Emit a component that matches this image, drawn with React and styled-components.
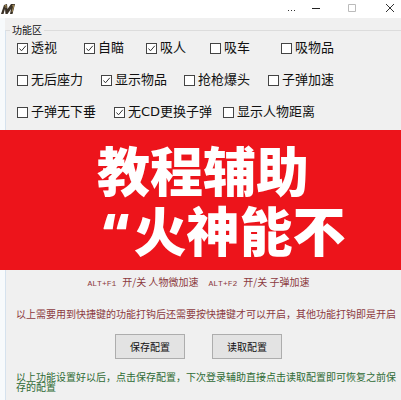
import styled, { createGlobalStyle } from "styled-components";

const GlobalStyle = createGlobalStyle`
  * {
    box-sizing: border-box;
  }
  body {
    margin: 0;
    background: #f0f0f0;
    font-family: "Noto Sans CJK SC", sans-serif;
    font-size: 10px;
    color: #111;
  }
`;

const Window = styled.div`
  display: flex;
  flex-direction: column;
  min-height: 100vh;
  overflow: hidden;
`;

const TitleBar = styled.header`
  display: flex;
  align-items: center;
  justify-content: space-between;
  height: 18px;
  padding-left: 1px;
  background: #fff;
`;

const WindowButtons = styled.div`
  display: flex;
  align-items: center;
`;

const WindowButton = styled.button`
  display: flex;
  justify-content: center;
  width: ${(props) => props.$width}px;
  padding: 0;
  border: none;
  background: none;
`;

const Client = styled.main`
  flex: 1;
  display: flex;
  flex-direction: column;
  padding-top: 4px;
  border-left: 5px solid #f7fafc;
`;

const Group = styled.fieldset`
  flex: 1;
  min-width: 0;
  margin: 0;
  padding: 0;
  border: 1px solid #dcdcdc;
  border-left-color: #d5e2ee;
  border-right: none;
  border-bottom: none;
`;

const Legend = styled.legend`
  margin-left: 4px;
  padding: 0 2px;
  line-height: 16px;
`;

const Options = styled.div`
  display: flex;
  flex-direction: column;
  gap: 12px;
  padding: 0 0 8px 11px;
`;

const OptionRow = styled.div`
  display: grid;
  grid-template-columns: ${(props) => props.$columns};
`;

const Option = styled.label`
  display: flex;
  align-items: center;
  gap: 3px;
  font-family: "DejaVu Sans", "Noto Sans CJK SC", sans-serif;
  font-size: 13px;
  line-height: 20px;
  white-space: nowrap;
`;

const Checkbox = styled.input`
  appearance: none;
  width: 11px;
  height: 11px;
  margin: 0;
  border: 1px solid #444;
  background: #fff;
  &:checked {
    background: #fff
      url("data:image/svg+xml,%3Csvg xmlns='http://www.w3.org/2000/svg' viewBox='0 0 9 9'%3E%3Cpath d='M1.5 4.5L3.5 6.8L7.8 1.8' fill='none' stroke='%23333'/%3E%3C/svg%3E");
  }
`;

const Banner = styled.h1`
  margin: 0 0 0 -6px;
  padding: 14px 0 6px 97px;
  background: #ed141b;
  color: #fff;
  font-family: "Liberation Sans", "Noto Sans CJK SC", sans-serif;
  font-size: 53px;
  font-weight: 900;
  line-height: 60px;
  white-space: nowrap;
`;

const Line = styled.span`
  display: block;
`;

const Quote = styled.span`
  margin: 0 4px 0 6px;
  font-family: "Open Sans", sans-serif;
  line-height: 1;
`;

const Shortcuts = styled.p`
  display: flex;
  justify-content: center;
  gap: 10px;
  margin: 4px 10px 17px 0;
  color: #8c3a40;
  line-height: 16px;
`;

const Key = styled.kbd`
  margin-right: 6px;
  font-family: "Liberation Mono", monospace;
  font-size: 8px;
`;

const Note = styled.p`
  margin: 0;
  padding-left: 10px;
  color: ${(props) => props.$color};
  line-height: 10px;
`;

const Actions = styled.div`
  display: flex;
  justify-content: center;
  gap: 27px;
  margin: 15px 10px 13px 0;
`;

const Button = styled.button`
  width: 70px;
  height: 25px;
  padding: 0;
  border: 1px solid #adadad;
  background: #e3e3e3;
  color: #111;
  font: inherit;
`;

const optionRows = [
  {
    columns: "67px 62px 64px 71px auto",
    options: [
      ["透视", true],
      ["自瞄", true],
      ["吸人", true],
      ["吸车", false],
      ["吸物品", false],
    ],
  },
  {
    columns: "84px 83px 84px auto",
    options: [
      ["无后座力", false],
      ["显示物品", true],
      ["抢枪爆头", false],
      ["子弹加速", false],
    ],
  },
  {
    columns: "97px 109px auto",
    options: [
      ["子弹无下垂", false],
      ["无CD更换子弹", true],
      ["显示人物距离", false],
    ],
  },
];

function Logo() {
  return (
    <svg width="14" height="12" viewBox="0 0 14 12">
      <path d="M0 11L3 2L6 1L6.500 6L10 1L14 1L11.500 11L9 11L10 6L6.500 11L4.500 11L4 6L2.500 11Z" fill="#3b3227" />
      <path d="M3.500 3L5 2L5 5M11 3L13 2L11 9" fill="none" stroke="#a58b55" />
    </svg>
  );
}

function App() {
  return (
    <Window>
      <GlobalStyle />
      <TitleBar>
        <Logo />
        <WindowButtons>
          <WindowButton $width={32} aria-label="More">
            <svg width="8" height="10"><path d="M1 6.500h1M4 6.500h1M7 6.500h1" stroke="#333" /></svg>
          </WindowButton>
          <WindowButton $width={18} aria-label="Minimize">
            <svg width="8" height="10"><path d="M0 4.500h8" stroke="#222" /></svg>
          </WindowButton>
          <WindowButton $width={54} aria-label="Maximize">
            <svg width="8" height="10"><path d="M0.500 0.500h7v7h-7z" fill="none" stroke="#bbb" /></svg>
          </WindowButton>
          <WindowButton $width={22} aria-label="Close">
            <svg width="10" height="10"><path d="M1 0l8 8M9 0l-8 8" stroke="#333" /></svg>
          </WindowButton>
        </WindowButtons>
      </TitleBar>
      <Client>
        <Group>
          <Legend>功能区</Legend>
          <Options>
            {optionRows.map((row) => (
              <OptionRow key={row.columns} $columns={row.columns}>
                {row.options.map(([name, checked]) => (
                  <Option key={name}>
                    <Checkbox type="checkbox" defaultChecked={checked} />
                    {name}
                  </Option>
                ))}
              </OptionRow>
            ))}
          </Options>
          <Banner>
            <Line>教程辅助</Line>
            <Line><Quote>“</Quote>火神能不</Line>
          </Banner>
          <Shortcuts>
            <span><Key>ALT+F1</Key>开/关 人物微加速</span>
            <span><Key>ALT+F2</Key>开/关 子弹加速</span>
          </Shortcuts>
          <Note $color="#8c3a40">以上需要用到快捷键的功能打钩后还需要按快捷键才可以开启，其他功能打钩即是开启</Note>
          <Actions>
            <Button>保存配置</Button>
            <Button>读取配置</Button>
          </Actions>
          <Note $color="#2f6b35">以上功能设置好以后，点击保存配置，下次登录辅助直接点击读取配置即可恢复之前保存的配置</Note>
        </Group>
      </Client>
    </Window>
  );
}

export default App;
